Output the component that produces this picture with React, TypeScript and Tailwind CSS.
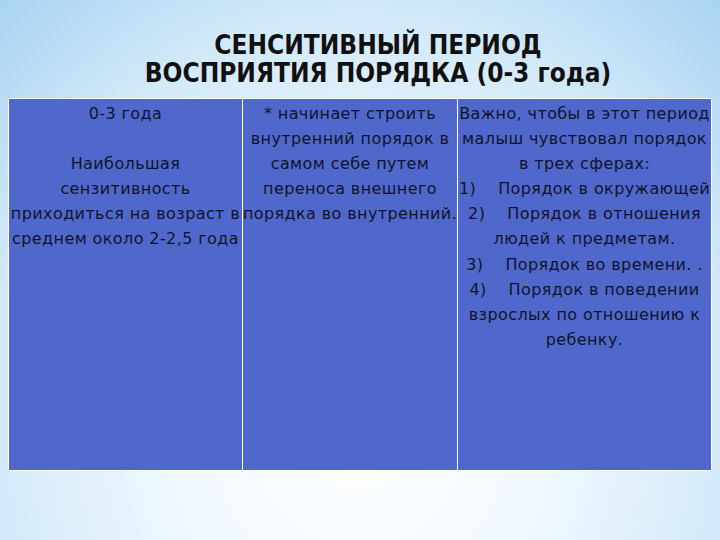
const col1 = ['0-3 года', '\u00a0', 'Наибольшая', 'сензитивность', 'приходиться на возраст в', 'среднем около 2-2,5 года'];
const col2 = ['* начинает строить', 'внутренний порядок в', 'самом себе путем', 'переноса внешнего', 'порядка во внутренний.'];
const col3 = [
  'Важно, чтобы в этот период',
  'малыш чувствовал порядок',
  'в трех сферах:',
  '1)\u00a0\u00a0\u00a0 Порядок в окружающей',
  '2)\u00a0\u00a0\u00a0 Порядок в отношения',
  'людей к предметам.',
  '3)\u00a0\u00a0\u00a0 Порядок во времени. .',
  '4)\u00a0\u00a0\u00a0 Порядок в поведении',
  'взрослых по отношению к',
  'ребенку.',
];

function Cell({ lines, border }: { lines: string[]; border?: boolean }) {
  return (
    <div className={`flex flex-col items-center pt-[2px] ${border ? 'border-l border-white' : ''}`}>
      {lines.map((l, i) => (
        <div key={i} className="whitespace-nowrap leading-[25.1px]">
          {l}
        </div>
      ))}
    </div>
  );
}

export default function App() {
  return (
    <div className="w-[720px] h-[540px] flex flex-col overflow-hidden bg-[radial-gradient(ellipse_75%_110%_at_50%_80%,#ffffff_0%,#f0f8fe_35%,#d2e9f8_70%,#a6d1f2_100%)]">
      {/* title */}
      <div className="pt-[31px] pl-[36px] h-[98px] text-center text-[26px] leading-[28px] font-bold text-[#111] font-['DejaVu_Sans_Condensed','DejaVu_Sans',sans-serif]">
        <div>СЕНСИТИВНЫЙ ПЕРИОД</div>
        <div>ВОСПРИЯТИЯ ПОРЯДКА (0-3 года)</div>
      </div>

      {/* table */}
      <div className="ml-[8px] w-[704px] h-[373px] grid grid-cols-[233px_215px_1fr] bg-[#5068cb] border border-white text-[16px] tracking-[0.4px] text-[#10142a] font-['DejaVu_Sans',sans-serif]">
        <Cell lines={col1} />
        <Cell lines={col2} border />
        <Cell lines={col3} border />
      </div>
    </div>
  );
}
